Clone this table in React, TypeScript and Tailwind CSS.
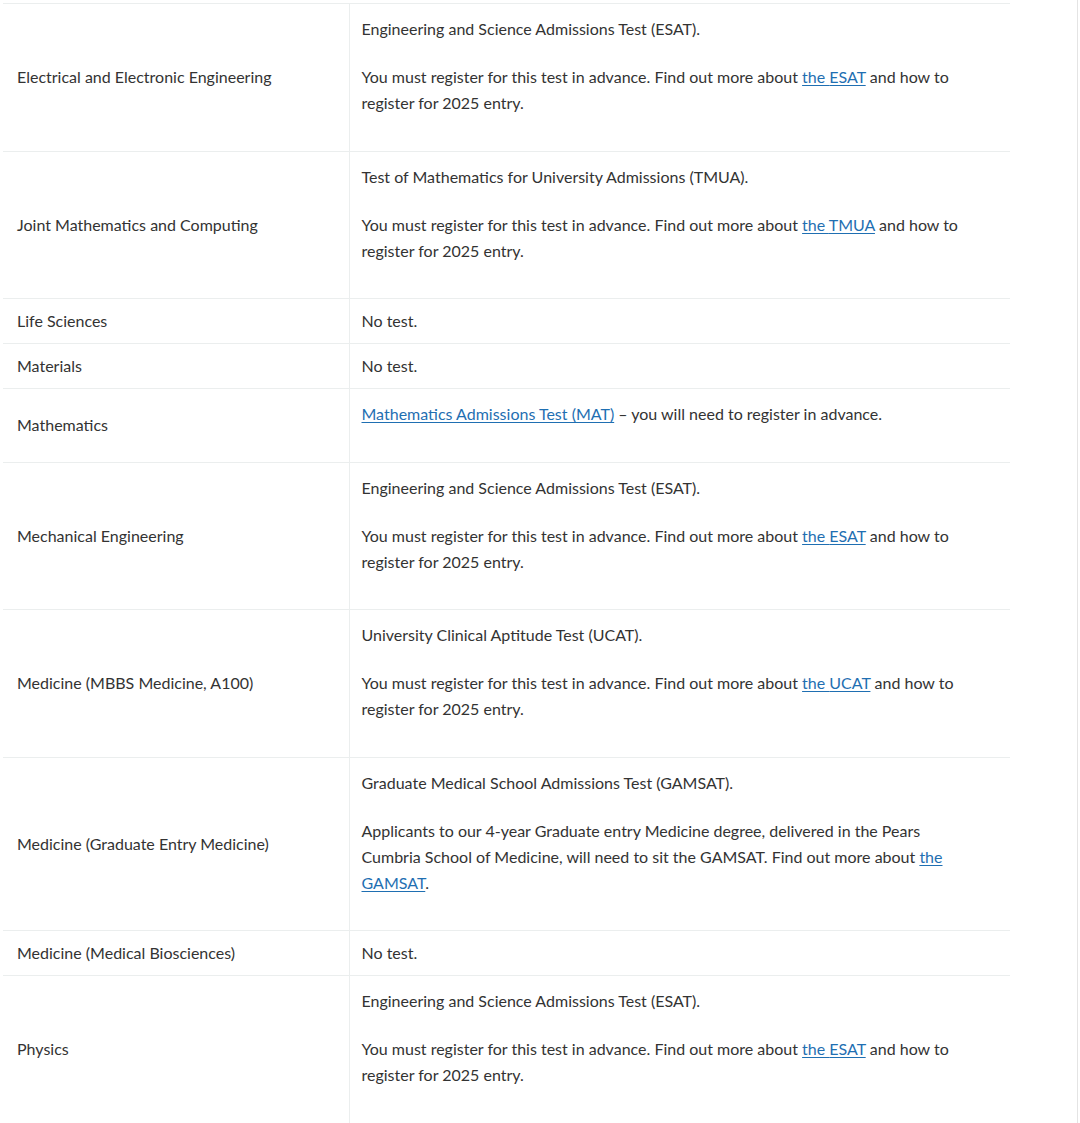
import type { ReactNode } from "react";

interface TestRow {
  course: string;
  body: ReactNode[] | null;
}

function A({ children }: { children: ReactNode }) {
  return (
    <a href="#" className="text-[#1f6fb2] underline underline-offset-2 decoration-1">
      {children}
    </a>
  );
}

function register(test: string) {
  return (
    <>
      You must register for this test in advance. Find out more about <A>the {test}</A> and how to register for 2025 entry.
    </>
  );
}

const esat = ["Engineering and Science Admissions Test (ESAT).", register("ESAT")];

const rows: TestRow[] = [
  { course: "Electrical and Electronic Engineering", body: esat },
  {
    course: "Joint Mathematics and Computing",
    body: ["Test of Mathematics for University Admissions (TMUA).", register("TMUA")],
  },
  { course: "Life Sciences", body: null },
  { course: "Materials", body: null },
  {
    course: "Mathematics",
    body: [
      <>
        <A>Mathematics Admissions Test (MAT)</A> – you will need to register in advance.
      </>,
    ],
  },
  { course: "Mechanical Engineering", body: esat },
  {
    course: "Medicine (MBBS Medicine, A100)",
    body: ["University Clinical Aptitude Test (UCAT).", register("UCAT")],
  },
  {
    course: "Medicine (Graduate Entry Medicine)",
    body: [
      "Graduate Medical School Admissions Test (GAMSAT).",
      <>
        Applicants to our 4-year Graduate entry Medicine degree, delivered in the Pears Cumbria School of Medicine, will
        need to sit the GAMSAT. Find out more about <A>the GAMSAT</A>.
      </>,
    ],
  },
  { course: "Medicine (Medical Biosciences)", body: null },
  { course: "Physics", body: esat },
];

export default function App() {
  return (
    <div className="h-[1123px] w-[1078px] border-r border-[#e4e4e4] bg-white pt-[3px] pl-[3px] font-['Lato',sans-serif] text-[16px] leading-[26px] text-[#333]">
      <table className="w-[1007px] border-collapse">
        <tbody>
          {rows.map((r) => (
            <tr key={r.course} className="border-y border-[#ebeeee]">
              <td className="w-[346px] pl-[14px] pr-3 align-middle">{r.course}</td>
              <td className="border-l border-[#ebeeee] pl-3 pr-[34px] align-top">
                {r.body ? (
                  <div className="pt-3 pb-[12.5px]">
                    {r.body.map((p, i) => (
                      <p key={i} className="mb-[22px]">
                        {p}
                      </p>
                    ))}
                  </div>
                ) : (
                  <div className="py-[9px]">No test.</div>
                )}
              </td>
            </tr>
          ))}
        </tbody>
      </table>
    </div>
  );
}
